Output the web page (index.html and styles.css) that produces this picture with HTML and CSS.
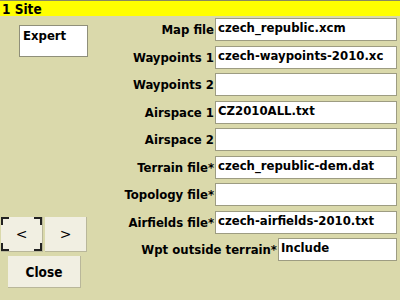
FILE: index.html
```html
<!DOCTYPE html>
<html lang="en">
<head>
    <meta charset="UTF-8">
    <title>1 Site</title>
    <link rel="stylesheet" href="styles.css">
</head>
<body>
    <div class="dialog">
        <div class="caption">1 Site</div>
        <div class="content">
            <div class="side">
                <div class="mode-box">Expert</div>
                <div class="side-buttons">
                    <div class="nav-row">
                        <button class="btn nav focused">&lt;</button>
                        <button class="btn nav">&gt;</button>
                    </div>
                    <button class="btn close">Close</button>
                </div>
            </div>
            <div class="fields">
                <div class="field"><span class="label">Map file</span><span class="value">czech_republic.xcm</span></div>
                <div class="field"><span class="label">Waypoints 1</span><span class="value">czech-waypoints-2010.xc</span></div>
                <div class="field"><span class="label">Waypoints 2</span><span class="value"></span></div>
                <div class="field"><span class="label">Airspace 1</span><span class="value">CZ2010ALL.txt</span></div>
                <div class="field"><span class="label">Airspace 2</span><span class="value"></span></div>
                <div class="field"><span class="label">Terrain file*</span><span class="value">czech_republic-dem.dat</span></div>
                <div class="field"><span class="label">Topology file*</span><span class="value"></span></div>
                <div class="field"><span class="label">Airfields file*</span><span class="value">czech-airfields-2010.txt</span></div>
                <div class="field"><span class="label">Wpt outside terrain*</span><span class="value short">Include</span></div>
            </div>
        </div>
    </div>
</body>
</html>
```

FILE: styles.css
```css
html, body {
    margin: 0;
    padding: 0;
}
body {
    width: 400px;
    height: 300px;
    overflow: hidden;
    background-color: #dad9ab;
    font-family: "DejaVu Sans Condensed", "DejaVu Sans", sans-serif;
    font-weight: bold;
    font-size: 13px;
    color: #000;
}
.dialog {
    width: 400px;
    height: 300px;
    display: flex;
    flex-direction: column;
}
.caption {
    height: 16px;
    line-height: 16px;
    background-color: #ffff00;
    padding-left: 2px;
    border-top: 1px solid #8a8a60;
    box-sizing: border-box;
    font-size: 13.5px;
}
.content {
    flex: 1;
    display: flex;
    padding: 2px 3px 0 1px;
}
.side {
    width: 88px;
    display: flex;
    flex-direction: column;
}
.mode-box {
    margin: 7px 0 0 18px;
    width: 69px;
    height: 32px;
    box-sizing: border-box;
    background-color: #fff;
    border: 1px solid #8f8f7a;
    padding: 2px 0 0 3px;
}
.side-buttons {
    margin-top: auto;
    margin-bottom: 12px;
}
.nav-row {
    display: flex;
    gap: 2px;
}
.btn {
    font: inherit;
    color: #000;
    background-color: #f1efe2;
    border: none;
    border-right: 1px solid #b9b79a;
    border-bottom: 1px solid #b9b79a;
    padding: 0;
    margin: 0;
}
.nav {
    width: 42px;
    height: 35px;
    font-family: "DejaVu Sans", sans-serif;
    font-weight: normal;
    font-size: 14px;
}
.focused {
    position: relative;
}
.focused::before,
.focused::after {
    content: "";
    position: absolute;
    width: 6px;
    height: 6px;
    border: 0 solid #222;
}
.focused::before {
    left: 0;
    top: 0;
    border-left-width: 2px;
    border-top-width: 2px;
}
.focused::after {
    right: 0;
    bottom: 0;
    border-right-width: 2px;
    border-bottom-width: 2px;
}
.nav.focused {
    background-image:
        linear-gradient(#222, #222), linear-gradient(#222, #222),
        linear-gradient(#222, #222), linear-gradient(#222, #222);
    background-size: 8px 2px, 2px 8px, 8px 2px, 2px 8px;
    background-position: right top, right top, left bottom, left bottom;
    background-repeat: no-repeat;
}
.close {
    display: block;
    margin: 4px 0 0 7px;
    width: 73px;
    height: 32px;
    font-size: 13.5px;
}
.fields {
    flex: 1;
    display: flex;
    flex-direction: column;
    gap: 4.5px;
}
.field {
    display: flex;
    height: 23px;
    align-items: center;
}
.label {
    flex: 1;
    text-align: right;
    padding-right: 1px;
}
.value {
    width: 182px;
    height: 23px;
    box-sizing: border-box;
    background-color: #fff;
    border: 1px solid #9d9c82;
    padding: 1px 0 0 2px;
    white-space: nowrap;
    overflow: hidden;
}
.value.short {
    width: 119px;
}
```
